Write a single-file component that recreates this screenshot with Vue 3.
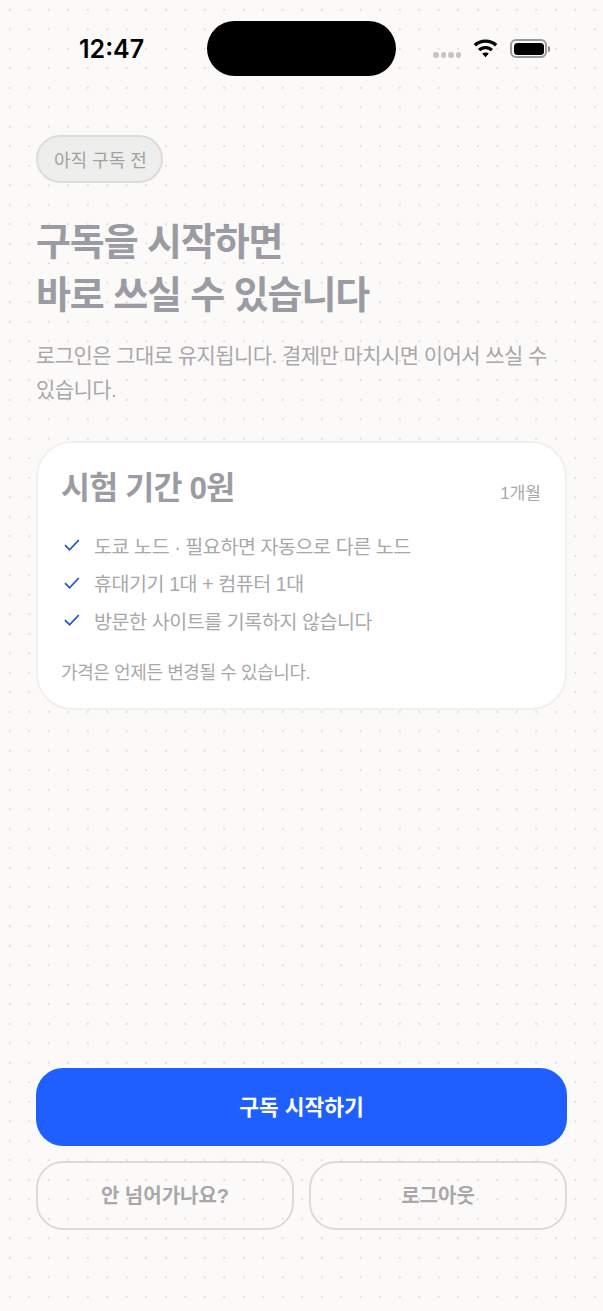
<template>
  <div class="page">
    <div class="status-bar">
      <span class="time">12:47</span>
      <div class="island"></div>
      <div class="status-icons">
        <div class="signal">
          <i v-for="n in 4" :key="n"></i>
        </div>
        <svg class="wifi" width="25" height="19" viewBox="0 0 25 19">
          <path d="M12.5 0.5C7.9 0.5 3.8 2.2 0.7 5L3 7.4C5.5 5.2 8.8 3.8 12.5 3.8C16.2 3.8 19.5 5.2 22 7.4L24.3 5C21.2 2.2 17.1 0.5 12.5 0.5Z" fill="#000" />
          <path d="M12.5 7C9.6 7 7 8.1 5 9.9L7.3 12.3C8.7 11.1 10.5 10.3 12.5 10.3C14.5 10.3 16.3 11.1 17.7 12.3L20 9.9C18 8.1 15.4 7 12.5 7Z" fill="#000" />
          <path d="M12.5 13.4C11.2 13.4 10.1 13.9 9.2 14.6L12.5 18.2L15.8 14.6C14.9 13.9 13.8 13.4 12.5 13.4Z" fill="#000" />
        </svg>
        <div class="battery">
          <div class="battery-level"></div>
        </div>
        <div class="battery-cap"></div>
      </div>
    </div>

    <main class="content">
      <span class="pill">아직 구독 전</span>
      <h1 class="title">구독을 시작하면<br />바로 쓰실 수 있습니다</h1>
      <p class="desc">로그인은 그대로 유지됩니다. 결제만 마치시면 이어서 쓰실 수 있습니다.</p>

      <section class="card">
        <div class="card-head">
          <h2 class="plan-name">시험 기간 0원</h2>
          <span class="plan-term">1개월</span>
        </div>
        <ul class="features">
          <li v-for="item in features" :key="item">
            <svg width="18" height="14" viewBox="0 0 18 14" fill="none">
              <path d="M2 7.2L6.6 11.8L15.8 2" stroke="#1f55d8" stroke-width="1.8" />
            </svg>
            <span>{{ item }}</span>
          </li>
        </ul>
        <p class="note">가격은 언제든 변경될 수 있습니다.</p>
      </section>
    </main>

    <div class="actions">
      <button class="primary">구독 시작하기</button>
      <div class="secondary-row">
        <button class="secondary">안 넘어가나요?</button>
        <button class="secondary">로그아웃</button>
      </div>
    </div>
  </div>
</template>

<script setup>
const features = [
  '도쿄 노드 · 필요하면 자동으로 다른 노드',
  '휴대기기 1대 + 컴퓨터 1대',
  '방문한 사이트를 기록하지 않습니다',
]
</script>

<style>
html, body {
  margin: 0;
  background: #fbfaf8;
}
</style>

<style scoped>
.page {
  position: relative;
  width: 603px;
  height: 1311px;
  overflow: hidden;
  display: flex;
  flex-direction: column;
  box-sizing: border-box;
  padding: 0 36px 81px;
  background-color: #fbfaf8;
  background-image: radial-gradient(circle at center, #e0deda 1.1px, transparent 1.5px);
  background-size: 19.5px 19.5px;
  font-family: "Liberation Sans", "Noto Sans CJK KR", sans-serif;
}

.status-bar {
  height: 135px;
  flex-shrink: 0;
  position: relative;
  margin: 0 -36px;
}

.time {
  position: absolute;
  left: 79px;
  top: 33px;
  font-family: Inter, sans-serif;
  font-size: 25px;
  line-height: 32px;
  font-weight: 600;
  color: #000;
}

.island {
  position: absolute;
  left: 207px;
  top: 21px;
  width: 189px;
  height: 55px;
  border-radius: 28px;
  background: #000;
}

.status-icons {
  position: absolute;
  left: 433px;
  top: 39px;
  display: flex;
  align-items: center;
}

.signal {
  display: flex;
  gap: 2px;
  margin-top: 13px;
  margin-right: 12px;
}

.signal i {
  width: 5.5px;
  height: 6px;
  border-radius: 50%;
  background: #c4c4c4;
}

.wifi {
  margin-right: 12px;
}

.battery {
  width: 37px;
  height: 19px;
  box-sizing: border-box;
  border: 2px solid #9a9a9a;
  border-radius: 6px;
  padding: 1.5px;
}

.battery-level {
  width: 100%;
  height: 100%;
  border-radius: 3.5px;
  background: #000;
}

.battery-cap {
  width: 2px;
  height: 6px;
  margin-left: 1px;
  border-radius: 0 2px 2px 0;
  background: #8a8a8a;
}

.content {
  display: flex;
  flex-direction: column;
  align-items: flex-start;
}

.pill {
  box-sizing: border-box;
  height: 48px;
  padding: 0 14px 0 16px;
  display: flex;
  align-items: center;
  border: 2px solid #dcdcda;
  border-radius: 24px;
  background: rgba(235, 235, 233, 0.8);
  font-size: 18px;
  color: #a1a1a3;
}

.title {
  margin: 33px 0 0;
  font-size: 38px;
  line-height: 53px;
  font-weight: 700;
  letter-spacing: -1.1px;
  color: #9a9ba3;
}

.desc {
  margin: 17px 0 0;
  font-size: 21px;
  line-height: 34px;
  letter-spacing: -0.57px;
  color: #a8a8aa;
}

.card {
  box-sizing: border-box;
  align-self: stretch;
  height: 269px;
  margin-top: 34px;
  padding: 23px 24px 0 23px;
  background: #fff;
  border: 2px solid #f0f0ee;
  border-radius: 36px;
}

.card-head {
  display: flex;
  justify-content: space-between;
  align-items: flex-end;
}

.plan-name {
  margin: 0;
  font-size: 31.5px;
  line-height: 44px;
  font-weight: 700;
  letter-spacing: -0.8px;
  color: #9a9ba3;
}

.plan-term {
  font-size: 17px;
  line-height: 32px;
  color: #a8a8aa;
}

.features {
  list-style: none;
  margin: 20px 0 0;
  padding: 0;
  display: flex;
  flex-direction: column;
  gap: 7.5px;
}

.features li {
  display: flex;
  align-items: center;
  gap: 13px;
  height: 30px;
  margin-left: 2px;
  font-size: 19.5px;
  letter-spacing: -0.4px;
  color: #a8a8aa;
}

.note {
  margin: 25px 0 0;
  font-size: 18px;
  line-height: 26px;
  letter-spacing: -0.4px;
  color: #a8a8aa;
}

.actions {
  margin-top: auto;
  display: flex;
  flex-direction: column;
  gap: 15px;
}

button {
  font-family: inherit;
  cursor: pointer;
}

.primary {
  height: 78px;
  border: none;
  border-radius: 27px;
  padding: 0 0 4px;
  background: #1f5fff;
  color: #fff;
  font-size: 21.5px;
  font-weight: 700;
}

.secondary-row {
  display: flex;
  gap: 15px;
}

.secondary {
  flex: 1;
  height: 69px;
  border: 2px solid #dcdad7;
  border-radius: 27px;
  padding: 0 0 2px;
  background: transparent;
  color: #a8a8aa;
  font-size: 20px;
  font-weight: 700;
}
</style>
